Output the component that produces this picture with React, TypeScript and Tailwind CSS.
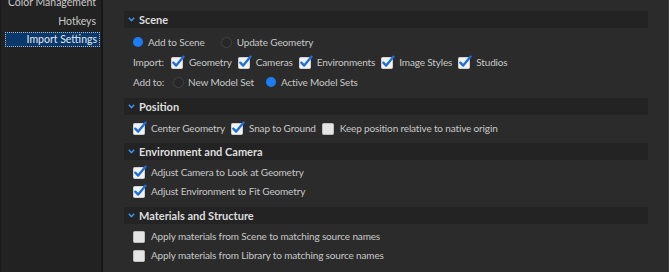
import React from "react";

const Chevron = () => (
  <svg width="7" height="5" viewBox="0 0 7 5" className="mr-[4px]">
    <path d="M0.8 0.8 L3.5 3.6 L6.2 0.8" stroke="#3b8fe8" strokeWidth="1.6" fill="none" />
  </svg>
);

const Check = ({ checked }: { checked: boolean }) => (
  <svg width="14" height="14" viewBox="0 0 14 14" className="shrink-0">
    <rect x="0.5" y="2.5" width="11" height="11" rx="1" fill={checked ? "#f2f2f2" : "#e4e4e4"} stroke={checked ? "#d0d0d0" : "#bdbdbd"} strokeWidth="1" />
    {checked && (
      <path d="M2.3 7.6 L5.2 10.6 L12.6 1.6" stroke="#1c6fd8" strokeWidth="2.3" fill="none" strokeLinecap="round" strokeLinejoin="round" />
    )}
  </svg>
);

const CheckItem = ({ checked, label, mr = "mr-[6px]" }: { checked: boolean; label: string; mr?: string }) => (
  <div className={`flex items-center ${mr}`}>
    <Check checked={checked} />
    <span className="ml-[4px]">{label}</span>
  </div>
);

const Radio = ({ on }: { on: boolean }) =>
  on ? (
    <span className="w-[10px] h-[10px] rounded-full bg-[#1b7cf5] shrink-0" />
  ) : (
    <span className="w-[11px] h-[11px] rounded-full border border-[#434343] bg-[#272727] shrink-0" />
  );

const Header = ({ title }: { title: string }) => (
  <div className="h-[17px] bg-[#232323] flex items-center pl-[4px] font-bold text-[#dedede] text-[11px] tracking-normal">
    <Chevron />
    <span>{title}</span>
  </div>
);

export default function App() {
  return (
    <div
      className="w-[669px] h-[272px] flex overflow-hidden bg-[#2b2b2b] text-[#c8c8c8] text-[10px] tracking-[-0.15px] leading-none whitespace-nowrap"
      style={{ fontFamily: 'Lato, "Open Sans", sans-serif' }}
    >
      <div className="w-[103px] h-full bg-[#222222] border-l border-[#1a1a1a] border-r-2 border-r-[#161616] flex flex-col items-end text-[10.5px] tracking-normal">
        <div className="-mt-[7px] h-[19px] flex items-center pr-[5px]">Color Management</div>
        <div className="h-[19px] flex items-center pr-[5px]">Hotkeys</div>
        <div className="mt-[1px] w-[95px] mr-[1px] h-[15px] bg-[#0b386a] border border-dotted border-[#a9b8c8] text-[#e2e8ef] flex items-center justify-end pr-[2px]">
          Import Settings
        </div>
      </div>
      <div className="flex-1 pl-[21px] pr-[20px] pt-[11px] border-r border-[#3a3a3a]">
        {/* Scene */}
        <Header title="Scene" />
        <div className="pt-[4px] pb-[6px] pl-[9px]">
          <div className="h-[20px] flex items-center">
            <Radio on={true} />
            <span className="ml-[5px] mr-[16px]">Add to Scene</span>
            <Radio on={false} />
            <span className="ml-[5px]">Update Geometry</span>
          </div>
          <div className="h-[20px] flex items-center">
            <span className="mr-[7px]">Import:</span>
            <CheckItem checked label="Geometry" />
            <CheckItem checked label="Cameras" />
            <CheckItem checked label="Environments" />
            <CheckItem checked label="Image Styles" />
            <CheckItem checked label="Studios" />
          </div>
          <div className="h-[20px] flex items-center">
            <span className="mr-[9px]">Add to:</span>
            <Radio on={false} />
            <span className="ml-[4px] mr-[12px]">New Model Set</span>
            <Radio on={true} />
            <span className="ml-[5px]">Active Model Sets</span>
          </div>
        </div>
        {/* Position */}
        <Header title="Position" />
        <div className="pt-[3px] pb-[5px] pl-[9px]">
          <div className="h-[20px] flex items-center">
            <CheckItem checked label="Center Geometry" />
            <CheckItem checked label="Snap to Ground" />
            <CheckItem checked={false} label="Keep position relative to native origin" />
          </div>
        </div>
        {/* Environment */}
        <Header title="Environment and Camera" />
        <div className="pt-[2px] pb-[7px] pl-[9px]">
          <div className="h-[19px] flex items-center">
            <CheckItem checked label="Adjust Camera to Look at Geometry" />
          </div>
          <div className="h-[19px] flex items-center">
            <CheckItem checked label="Adjust Environment to Fit Geometry" />
          </div>
        </div>
        {/* Materials */}
        <Header title="Materials and Structure" />
        <div className="pt-[2px] pl-[9px]">
          <div className="h-[19px] flex items-center">
            <CheckItem checked={false} label="Apply materials from Scene to matching source names" />
          </div>
          <div className="h-[19px] flex items-center">
            <CheckItem checked={false} label="Apply materials from Library to matching source names" />
          </div>
        </div>
      </div>
    </div>
  );
}
